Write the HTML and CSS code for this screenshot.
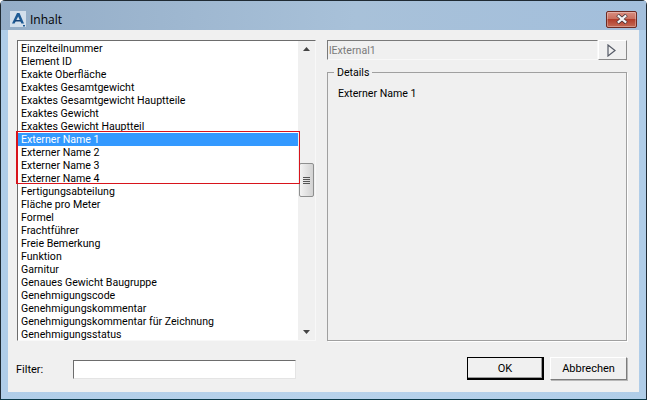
FILE: index.html
```html
<!DOCTYPE html>
<html lang="de">
<head>
<meta charset="utf-8">
<title>Inhalt</title>
<link rel="stylesheet" href="styles.css">
</head>
<body>
<div class="window">
  <header class="titlebar">
    <svg class="app-icon" width="16" height="16" viewBox="0 0 16 16"><rect width="16" height="16" fill="#d3dfec"/><path d="M2 12.5 L7 2 H9.5 L14 12.5 H11.4 L8.2 5.5 L4.6 12.5 Z" fill="#1f5c96"/><path d="M5 9 H10.6 L11.4 10.6 H4.2 Z" fill="#17457a"/><rect x="13" y="14" width="2" height="1.5" fill="#1f5c96"/></svg>
    <span class="title">Inhalt</span>
    <button class="close" aria-label="Schließen"><svg width="12" height="10" viewBox="0 0 12 10"><path d="M1.5 1 L10.5 9 M10.5 1 L1.5 9" stroke="#3b2b30" stroke-width="3.6"/><path d="M1.8 1.3 L10.2 8.7 M10.2 1.3 L1.8 8.7" stroke="#f4f4f6" stroke-width="2.2"/></svg></button>
  </header>
  <main class="client">
    <div class="top">
      <div class="listbox">
        <ul class="items">
          <li>Einzelteilnummer</li>
          <li>Element ID</li>
          <li>Exakte Oberfläche</li>
          <li>Exaktes Gesamtgewicht</li>
          <li>Exaktes Gesamtgewicht Hauptteile</li>
          <li>Exaktes Gewicht</li>
          <li>Exaktes Gewicht Hauptteil</li>
          <li class="selected">Externer Name 1</li>
          <li>Externer Name 2</li>
          <li>Externer Name 3</li>
          <li>Externer Name 4</li>
          <li>Fertigungsabteilung</li>
          <li>Fläche pro Meter</li>
          <li>Formel</li>
          <li>Frachtführer</li>
          <li>Freie Bemerkung</li>
          <li>Funktion</li>
          <li>Garnitur</li>
          <li>Genaues Gewicht Baugruppe</li>
          <li>Genehmigungscode</li>
          <li>Genehmigungskommentar</li>
          <li>Genehmigungskommentar für Zeichnung</li>
          <li>Genehmigungsstatus</li>
        </ul>
        <div class="scrollbar">
          <svg class="arrow" width="7" height="4" viewBox="0 0 7 4"><path d="M0 4 L3.5 0 L7 4 Z" fill="#444"/></svg>
          <div class="thumb"><span></span><span></span><span></span><span></span></div>
          <svg class="arrow" width="7" height="4" viewBox="0 0 7 4"><path d="M0 0 L3.5 4 L7 0 Z" fill="#444"/></svg>
        </div>
        <div class="red-box"></div>
      </div>
      <div class="side">
        <div class="field-row">
          <div class="field">lExternal1</div>
          <button class="arrow-btn" aria-label="Weiter"><svg width="9" height="13" viewBox="0 0 9 13"><path d="M1 1 L8 6.5 L1 12 Z" fill="none" stroke="#555a66" stroke-width="1.2"/></svg></button>
        </div>
        <section class="group">
          <span class="legend">Details</span>
          <p class="detail">Externer Name 1</p>
        </section>
      </div>
    </div>
    <div class="bottom">
      <label class="filter-label">Filter:</label>
      <div class="filter-input"></div>
      <button class="btn default">OK</button>
      <button class="btn">Abbrechen</button>
    </div>
  </main>
</div>
</body>
</html>
```

FILE: styles.css
```css
* { box-sizing: border-box; }
html, body { margin: 0; padding: 0; }
body {
  width: 647px;
  height: 400px;
  overflow: hidden;
  font-family: Roboto, "Liberation Sans", Arial, sans-serif;
  font-size: 10.6px;
  color: #000;
}
.window {
  width: 647px;
  height: 400px;
  display: flex;
  flex-direction: column;
  padding: 0 7px 7px;
  border: 1px solid #1f2a33;
  border-radius: 5px 5px 0 0;
  border-bottom-color: #0c3a4a;
  background: linear-gradient(90deg, #b0cde8 0, #b8d2eb 50%, #b0cde8 100%);
}
.titlebar {
  height: 29px;
  flex: none;
  margin: 0 -7px;
  padding: 0 9px 0 9px;
  display: flex;
  align-items: center;
  background: linear-gradient(90deg, #94adc7 0, #a8c1d9 55%, #a3bfdc 100%);
}
.app-icon { flex: none; margin-top: 6px; }
.title {
  margin-left: 4px;
  margin-top: 7px;
  font-family: "Open Sans", Roboto, sans-serif;
  font-size: 12px;
  flex: 1;
}
.close {
  width: 31px;
  height: 17px;
  padding: 0;
  margin-top: 7px;
  display: flex;
  align-items: center;
  justify-content: center;
  border: 1px solid #6e2a22;
  border-radius: 2px;
  background: linear-gradient(#d98d80 0, #c9705f 45%, #b23d2a 50%, #c46a55 100%);
  box-shadow: inset 0 0 0 1px rgba(255,255,255,.3);
}
.client {
  flex: 1;
  background: #f0f0f0;
  padding: 10px 12px 10px 9px;
  display: flex;
  flex-direction: column;
}
.top { display: flex; gap: 11px; height: 301px; flex: none; }
.listbox {
  position: relative;
  width: 299px;
  flex: none;
  display: flex;
  border: 1px solid;
  border-color: #6d6d6d #f8f8f8 #f8f8f8 #6d6d6d;
  background: #fff;
}
.items {
  list-style: none;
  margin: 0;
  padding: 1px 0 0;
  flex: 1;
  overflow: hidden;
}
.items li {
  height: 13px;
  line-height: 13px;
  padding-left: 3px;
  white-space: nowrap;
}
.items .selected { background: #3399ff; color: #fff; }
.scrollbar {
  width: 17px;
  flex: none;
  display: flex;
  flex-direction: column;
  align-items: center;
  background: #f0f0f0;
  padding: 6px 0;
}
.thumb {
  width: 15px;
  height: 34px;
  margin-top: 112px;
  margin-bottom: auto;
  border: 1px solid #8e8f8f;
  border-radius: 2px;
  background: linear-gradient(90deg, #f3f3f3, #d2d2d2);
  display: flex;
  flex-direction: column;
  justify-content: center;
  align-items: center;
  gap: 1px;
}
.thumb span { width: 7px; height: 1px; background: #555; }
.red-box {
  position: absolute;
  left: -2px;
  top: 90px;
  width: 284px;
  height: 53px;
  border: 1px solid #d8141c;
  border-left-width: 2px;
  pointer-events: none;
}
.side { flex: 1; display: flex; flex-direction: column; }
.field-row { display: flex; height: 20px; flex: none; }
.field {
  flex: 1;
  border: 1px solid;
  border-color: #7a7a7a #f8f8f8 #f8f8f8 #7a7a7a;
  padding: 2px 1px;
  line-height: 15px;
  color: #7a7a7a;
  background: #f0f0f0;
}
.arrow-btn {
  width: 29px;
  padding: 0 2px 0 0;
  border: 1px solid;
  border-color: #fff #8a8a8a #8a8a8a #fff;
  background: #f0f0f0;
  display: flex;
  align-items: center;
  justify-content: center;
}
.group {
  position: relative;
  margin-top: 12px;
  flex: 1;
  border: 1px solid #a0a0a0;
  box-shadow: 1px 1px 0 #fff;
  padding: 14px 10px;
}
.legend {
  position: absolute;
  left: 6px;
  top: -7px;
  padding: 0 3px;
  background: #f0f0f0;
  line-height: 13px;
}
.detail { margin: 0; line-height: 13px; }
.bottom { display: flex; align-items: center; margin-top: 16px; height: 23px; }
.filter-label { width: 57px; flex: none; margin-left: -1px; margin-top: 2px; font-size: 11px; }
.filter-input {
  width: 223px;
  height: 19px;
  flex: none;
  margin-top: 1px;
  margin-right: 171px;
  background: #fff;
  border: 1px solid;
  border-color: #6d6d6d #e4e4e4 #e4e4e4 #6d6d6d;
}
.btn {
  width: 77px;
  height: 23px;
  padding: 0;
  font: inherit;
  font-size: 11px;
  color: #000;
  background: #f0f0f0;
  border: 1px solid;
  border-color: #fff #7c7c7c #7c7c7c #fff;
  box-shadow: 1px 1px 0 #b8b8b8;
}
.btn.default {
  margin-right: 6px;
  border: 2px solid #000;
  border-width: 1px 2px 2px 1px;
  box-shadow: inset -1px -1px 0 #9a9a9a;
}
```
